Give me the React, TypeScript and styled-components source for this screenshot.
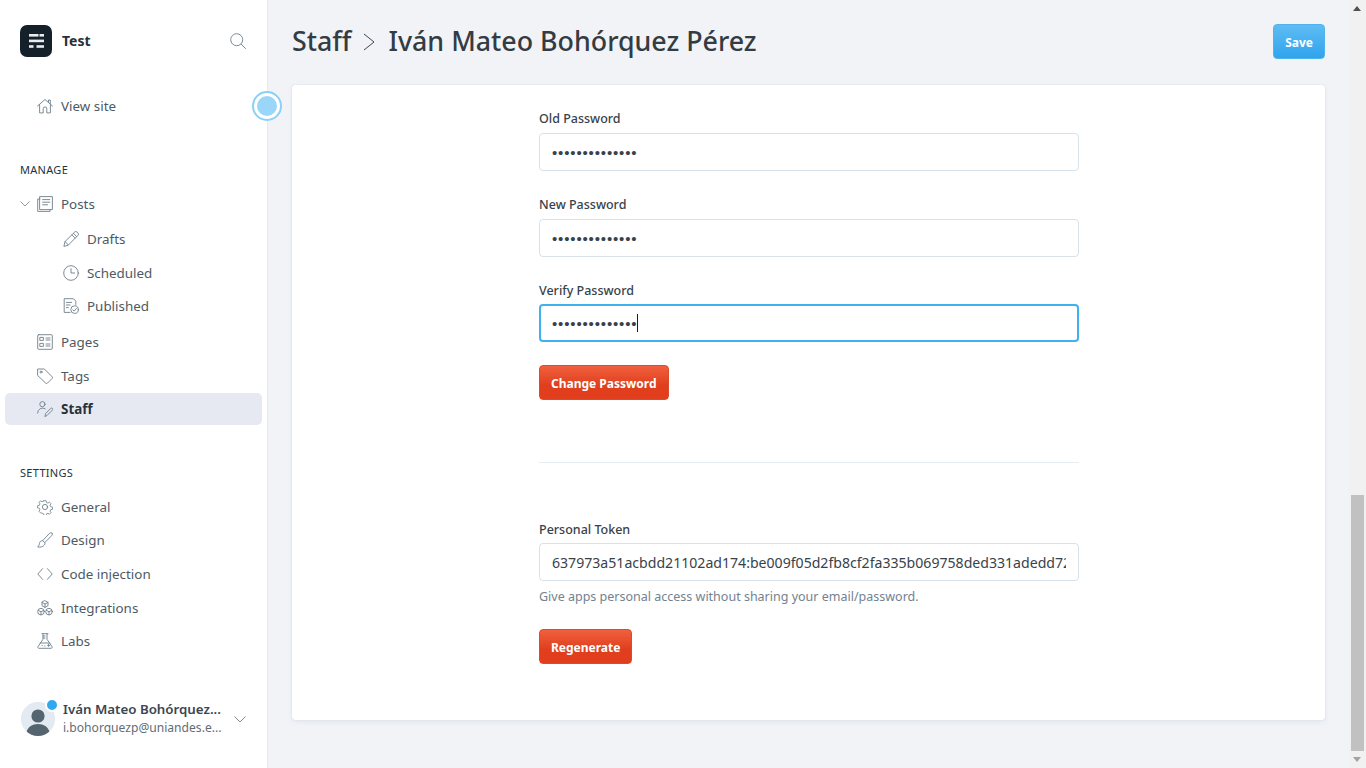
import React from 'react'
import styled, { createGlobalStyle } from 'styled-components'

const GlobalStyle = createGlobalStyle`
  html, body {
    margin: 0;
    height: 100%;
    overflow: hidden;
  }
  body {
    font-family: "Noto Sans", "Open Sans", sans-serif;
    color: #394047;
    background: #f1f3f7;
  }
  * {
    box-sizing: border-box;
  }
`

const Shell = styled.div`
  display: grid;
  grid-template-columns: 268px 1fr 17px;
  width: 1366px;
  height: 768px;
  overflow: hidden;
`

const Sidebar = styled.aside`
  position: relative;
  display: flex;
  flex-direction: column;
  background: #fff;
  border-right: 1px solid #e6e9f0;
  padding: 25px 5px 0;
`

const Brand = styled.div`
  display: flex;
  align-items: center;
  height: 32px;
  padding: 0 15px;
`

const Logo = styled.div`
  display: flex;
  align-items: center;
  justify-content: center;
  width: 32px;
  height: 32px;
  border-radius: 7px;
  background: #15212a;
`

const BrandName = styled.div`
  flex: 1;
  margin-left: 10px;
  font-size: 14px;
  font-weight: 700;
  color: #26323b;
  margin-top: -2px;
`

const SearchIcon = styled.svg`
  width: 16px;
  height: 16px;
  margin-right: 1px;
  fill: none;
  stroke: #7d8b95;
  stroke-width: 1;
`

const Nav = styled.nav<{ $top: number }>`
  display: flex;
  flex-direction: column;
  margin-top: ${p => p.$top}px;
`

const Heading = styled.div`
  height: 18px;
  line-height: 18px;
  padding-left: 15px;
  margin-bottom: 8px;
  font-size: 11px;
  letter-spacing: 0.3px;
  color: #26323b;
`

const Item = styled.div<{ $height?: number; $top?: number; $sub?: boolean; $active?: boolean }>`
  position: relative;
  display: flex;
  align-items: center;
  gap: 8px;
  flex: none;
  height: ${p => p.$height ?? 33.6}px;
  margin-top: ${p => p.$top ?? 0}px;
  padding-left: ${p => (p.$sub ? 58 : 32)}px;
  border-radius: 5px;
  background: ${p => (p.$active ? '#e6e9f2' : 'transparent')};
  font-size: 13.4px;
  font-weight: ${p => (p.$active ? 700 : 400)};
  color: ${p => (p.$active ? '#26323b' : '#4d5a65')};
`

const Glyph = styled.svg`
  flex: none;
  width: 16px;
  height: 16px;
  fill: none;
  stroke: #6f7f8a;
  stroke-width: 0.9;
  stroke-linecap: round;
  stroke-linejoin: round;
`

const Caret = styled.svg`
  position: absolute;
  left: 15px;
  top: 50%;
  width: 10px;
  height: 6px;
  margin-top: -3px;
  fill: none;
  stroke: #8e9ba5;
  stroke-width: 1;
`

const Pulse = styled.div`
  position: absolute;
  left: 252px;
  top: 91px;
  width: 30px;
  height: 30px;
  border-radius: 50%;
  border: 2px solid #8bd0f7;
  background: #fff;
  display: flex;
  align-items: center;
  justify-content: center;
  &::after {
    content: '';
    width: 20px;
    height: 20px;
    border-radius: 50%;
    background: #9ad6fa;
  }
`

const Account = styled.div`
  display: flex;
  align-items: center;
  margin: auto 0 31px 16px;
`

const Avatar = styled.div`
  position: relative;
  flex: none;
  width: 34px;
  height: 34px;
  border-radius: 50%;
  background: #e4eaf2;
  svg {
    display: block;
    width: 34px;
    height: 34px;
    border-radius: 50%;
  }
`

const Dot = styled.span`
  position: absolute;
  right: -4px;
  top: -4px;
  width: 14px;
  height: 14px;
  border: 2px solid #fff;
  border-radius: 50%;
  background: #30a8f0;
`

const AccountText = styled.div`
  width: 160px;
  margin-left: 8px;
`

const AccountName = styled.div`
  font-size: 13.3px;
  line-height: 18px;
  font-weight: 600;
  color: #3b4650;
  white-space: nowrap;
`

const AccountMail = styled.div`
  font-size: 12.1px;
  line-height: 19px;
  color: #5f6d78;
  white-space: nowrap;
`

const AccountCaret = styled.svg`
  width: 12px;
  height: 7px;
  margin: 1px 0 0 11px;
  fill: none;
  stroke: #7d8b95;
  stroke-width: 1;
`

const Main = styled.main`
  padding: 0 24px;
  min-width: 0;
`

const TitleBar = styled.header`
  display: flex;
  align-items: center;
  justify-content: space-between;
  height: 85px;
`

const Title = styled.h1`
  display: flex;
  align-items: center;
  margin: 0 0 4px;
  font-size: 26.8px;
  line-height: 36px;
  font-weight: 500;
  color: #343c43;
`

const TitleArrow = styled.svg`
  width: 12px;
  height: 18px;
  margin: 3px 13px 0 12px;
  fill: none;
  stroke: #3d464e;
  stroke-width: 1;
`

const Button = styled.button<{ $tone: 'blue' | 'red' }>`
  display: block;
  height: 35px;
  padding: 2px 11px 0;
  border-radius: 4px;
  border: 1px solid ${p => (p.$tone === 'blue' ? '#4fb3ef' : '#e04a28')};
  background: ${p =>
    p.$tone === 'blue'
      ? 'linear-gradient(#5fbcf3, #2fa4ec)'
      : 'linear-gradient(#f0603e, #e03e1c 60%)'};
  color: #fff;
  font-family: inherit;
  font-size: 12px;
  font-weight: 700;
`

const SaveButton = styled(Button)`
  margin: 0 0 2px;
`

const Card = styled.section`
  height: 635px;
  background: #fff;
  border-radius: 3px;
  box-shadow: 0 0 1px rgba(120, 160, 200, 0.5), 0 2px 5px rgba(120, 140, 170, 0.1);
  padding-left: 247px;
`

const Form = styled.div`
  width: 540px;
  padding-top: 25px;
`

const Field = styled.div<{ $gap?: number }>`
  margin-bottom: ${p => p.$gap ?? 25}px;
`

const Label = styled.label`
  display: block;
  height: 18px;
  line-height: 18px;
  margin-bottom: 5px;
  font-size: 12.5px;
  font-weight: 500;
  color: #38424b;
`

const InputBox = styled.div<{ $focused?: boolean; $raised?: boolean }>`
  display: flex;
  align-items: center;
  height: 38px;
  margin-top: ${p => (p.$raised ? -1 : 0)}px;
  padding: 0 ${p => (p.$focused ? 11 : 12)}px;
  overflow: hidden;
  border-radius: 4px;
  border: ${p => (p.$focused ? '2px solid #3fb0f0' : '1px solid #d8e2ea')};
  background: #fff;
`

const Dots = styled.span`
  padding-top: 1px;
  font-family: "Liberation Sans", sans-serif;
  font-size: 15px;
  letter-spacing: 0.85px;
  color: #38424b;
  white-space: nowrap;
`

const Cursor = styled.span`
  flex: none;
  width: 1px;
  height: 18px;
  background: #15212a;
`

const TokenText = styled.span`
  display: block;
  width: 515px;
  overflow: hidden;
  font-size: 14.1px;
  color: #38424b;
  white-space: nowrap;
`

const Hint = styled.p`
  margin: 7px 0 0;
  font-size: 12.5px;
  line-height: 18px;
  color: #738290;
`

const Rule = styled.hr`
  height: 1px;
  margin: 62px 0 58px;
  border: 0;
  background: #e6edf2;
`

const ScrollBar = styled.div`
  position: relative;
  background: #f1f1f1;
  &::before {
    content: '';
    position: absolute;
    left: 4px;
    top: 6px;
    border: 4.5px solid transparent;
    border-top: 0;
    border-bottom: 5px solid #505050;
  }
  &::after {
    content: '';
    position: absolute;
    left: 4px;
    bottom: 6px;
    border: 4.5px solid transparent;
    border-bottom: 0;
    border-top: 5px solid #a3a3a3;
  }
`

const Thumb = styled.div`
  position: absolute;
  left: 2px;
  right: 2px;
  top: 495px;
  height: 256px;
  background: #c1c1c1;
`

const paths: Record<string, React.ReactNode> = {
  home: <path d="M.6 8 8 1.5 15.4 8M2.6 6.6v8.300h3.600v-4.200a1.800 1.800 0 0 1 3.600 0v4.200h3.600V6.600M11.500 4.200V2h1.800v3.800" />,
  posts: (
    <>
      <path d="M3 .6h12.400v13H3zM3 3H.7v12.400h12.400v-1.800" />
      <path d="M5.600 3.600h7.200M5.600 6.200h7.200M5.600 8.800h5" />
    </>
  ),
  pencil: <path d="M1 15l1-4.400L11.800.9a1.500 1.500 0 0 1 2 0l1.300 1.300a1.500 1.500 0 0 1 0 2L5.400 14zM2 10.600 5.400 14M10.400 2.300l3.300 3.300M8.800 3.900l3.300 3.300" />,
  clock: (
    <>
      <circle cx="8" cy="8" r="7.300" />
      <path d="M8 3.600V8h3.600" />
    </>
  ),
  published: (
    <>
      <path d="M7 14.400H1.200V.7h9.200l2.400 2.400v3.400" />
      <path d="M3.400 4.400h5.200M3.400 7h3.600M3.400 9.600h2" />
      <circle cx="11.600" cy="11.600" r="3.800" />
      <path d="m9.800 11.800 1.300 1.300 2.300-2.600" />
    </>
  ),
  pages: (
    <>
      <rect x=".7" y=".7" width="14.600" height="14.600" rx="1" />
      <path d="M3.200 3.400h3.200v3H3.200zM3.200 9.400h3.200v3H3.200zM9 4h4M9 6h4M9 10h4M9 12h4" />
    </>
  ),
  tag: (
    <>
      <path d="M1 1h6.400l7.800 7.800a1.200 1.200 0 0 1 0 1.600l-4.800 4.800a1.200 1.200 0 0 1-1.600 0L.6 7.400V1.400z" />
      <circle cx="4" cy="4" r="1" />
    </>
  ),
  staff: (
    <>
      <circle cx="5.400" cy="3.200" r="2.600" />
      <path d="M.6 12a5 5 0 0 1 7.600-4.200M8 15.200l.7-2.800 5-5a1.200 1.200 0 0 1 1.700 1.700l-5 5z" />
    </>
  ),
  gear: (
    <>
      <circle cx="8" cy="8" r="2.600" />
      <path d="M6.800 1h2.400l.4 2 1.700.7 1.700-1.100 1.700 1.700-1.100 1.700.7 1.700 2 .4v2.400l-2 .4-.7 1.700 1.100 1.700-1.700 1.700-1.700-1.100-1.700.7-.4 2H6.800l-.4-2-1.700-.7L3 14.500l-1.700-1.700 1.100-1.700-.7-1.700-2-.4V6.600l2-.4.7-1.700L1.300 2.800 3 1.100l1.700 1.100 1.700-.7z" transform="translate(.8 .8) scale(.9)" />
    </>
  ),
  brush: <path d="M15 1.200c-.7-.8-1.600-.6-2.400.1L5.700 8.600l2 2 7-6.900c.7-.7 1-1.700.3-2.500zM5.700 8.600c-1.900 0-3 1-3.200 2.800-.1 1.300-.7 2.500-1.800 3.600 2.400.5 5.400-.2 6.700-2 .7-1 .8-1.700.3-2.400" />,
  code: <path d="M5.600 2.600.8 8l4.800 5.400M10.400 2.600 15.200 8l-4.800 5.400" />,
  integrations: (
    <>
      <path d="M8 .7 11 2.400v3.300L8 7.400 5 5.700V2.400zM5 2.400l3 1.700 3-1.700M8 4.100v3.300" />
      <circle cx="4" cy="11.600" r="3.300" />
      <circle cx="12" cy="11.600" r="3.300" />
      <path d="M1.400 10.400 4 11.800l2.600-1.400M4 11.800v3M9.400 10.400l2.600 1.400 2.600-1.400M12 11.800v3" />
    </>
  ),
  labs: (
    <>
      <path d="M5 .7h6M6 .7v5.600L1 13.600a1.100 1.100 0 0 0 1 1.700h12a1.100 1.100 0 0 0 1-1.700l-5-7.300V.7M6 3h2M6 5h2M3.200 10h9.600" />
      <path d="M10.600 12.400h2M11.600 11.400v2M5 12.600h.4M7.600 13h.4" />
    </>
  ),
}

const Icon: React.FC<{ name: string }> = ({ name }) => <Glyph viewBox="0 0 16 16">{paths[name]}</Glyph>

const DOTS = '••••••••••••••'
const TOKEN = '637973a51acbdd21102ad174:be009f05d2fb8cf2fa335b069758ded331adedd72f34'

const App: React.FC = () => (
  <>
    <GlobalStyle />
    <Shell>
      <Sidebar>
        <Brand>
          <Logo>
            <svg width="15" height="14" viewBox="0 0 15 14" fill="#e8ecef">
              <rect x="0" y="0" width="9.500" height="2.600" />
              <rect x="10.500" y="0" width="4.500" height="2.600" />
              <rect x="0" y="5.600" width="15" height="2.600" />
              <rect x="0" y="11.200" width="4.500" height="2.600" />
              <rect x="7.500" y="11.200" width="7.500" height="2.600" />
            </svg>
          </Logo>
          <BrandName>Test</BrandName>
          <SearchIcon viewBox="0 0 16 16">
            <circle cx="6.700" cy="6.700" r="6" />
            <path d="m11 11 4.800 4.800" />
          </SearchIcon>
        </Brand>
        <Nav $top={32}>
          <Item>
            <Icon name="home" />
            View site
          </Item>
        </Nav>
        <Nav $top={38}>
          <Heading>MANAGE</Heading>
          <Item $height={34}>
            <Caret viewBox="0 0 10 6">
              <path d="m.5.5 4.500 4.500L9.500.5" />
            </Caret>
            <Icon name="posts" />
            Posts
          </Item>
          <Item $sub $height={36}>
            <Icon name="pencil" />
            Drafts
          </Item>
          <Item $sub $height={32}>
            <Icon name="clock" />
            Scheduled
          </Item>
          <Item $sub $height={34}>
            <Icon name="published" />
            Published
          </Item>
          <Item $top={2} $height={34}>
            <Icon name="pages" />
            Pages
          </Item>
          <Item $height={34}>
            <Icon name="tag" />
            Tags
          </Item>
          <Item $active $height={32}>
            <Icon name="staff" />
            Staff
          </Item>
        </Nav>
        <Nav $top={39.4}>
          <Heading>SETTINGS</Heading>
          <Item>
            <Icon name="gear" />
            General
          </Item>
          <Item>
            <Icon name="brush" />
            Design
          </Item>
          <Item>
            <Icon name="code" />
            Code injection
          </Item>
          <Item>
            <Icon name="integrations" />
            Integrations
          </Item>
          <Item>
            <Icon name="labs" />
            Labs
          </Item>
        </Nav>
        <Pulse />
        <Account>
          <Avatar>
            <svg viewBox="0 0 34 34">
              <circle cx="17" cy="17" r="17" fill="#e4eaf2" />
              <circle cx="17" cy="14" r="6.600" fill="#55656f" />
              <path d="M5 34c0-8 5-12 12-12s12 4 12 12z" fill="#55656f" />
            </svg>
            <Dot />
          </Avatar>
          <AccountText>
            <AccountName>Iván Mateo Bohórquez...</AccountName>
            <AccountMail>i.bohorquezp@uniandes.e...</AccountMail>
          </AccountText>
          <AccountCaret viewBox="0 0 12 7">
            <path d="m.5.5 5.500 5.500L11.500.5" />
          </AccountCaret>
        </Account>
      </Sidebar>
      <Main>
        <TitleBar>
          <Title>
            Staff
            <TitleArrow viewBox="0 0 12 18">
              <path d="m1 1 10 8-10 8" />
            </TitleArrow>
            Iván Mateo Bohórquez Pérez
          </Title>
          <SaveButton $tone="blue">Save</SaveButton>
        </TitleBar>
        <Card>
          <Form>
            <Field>
              <Label>Old Password</Label>
              <InputBox>
                <Dots>{DOTS}</Dots>
              </InputBox>
            </Field>
            <Field>
              <Label>New Password</Label>
              <InputBox>
                <Dots>{DOTS}</Dots>
              </InputBox>
            </Field>
            <Field $gap={23}>
              <Label>Verify Password</Label>
              <InputBox $focused $raised>
                <Dots>{DOTS}</Dots>
                <Cursor />
              </InputBox>
            </Field>
            <Button $tone="red">Change Password</Button>
            <Rule />
            <Field $gap={23}>
              <Label>Personal Token</Label>
              <InputBox $raised>
                <TokenText>{TOKEN}</TokenText>
              </InputBox>
              <Hint>Give apps personal access without sharing your email/password.</Hint>
            </Field>
            <Button $tone="red">Regenerate</Button>
          </Form>
        </Card>
      </Main>
      <ScrollBar>
        <Thumb />
      </ScrollBar>
    </Shell>
  </>
)

export default App
